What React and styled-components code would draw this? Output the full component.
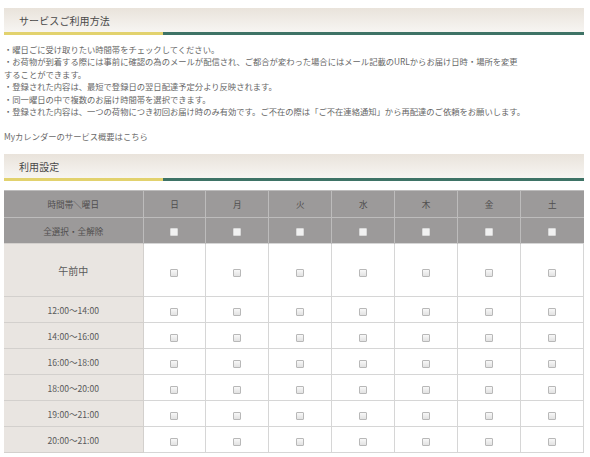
import React from "react";
import styled, { createGlobalStyle } from "styled-components";

const Global = createGlobalStyle`
  html, body { margin: 0; padding: 0; background: #fff; }
  body { font-family: "Noto Sans CJK JP", "Liberation Sans", sans-serif; color: #666; }
`;

const Page = styled.div`
  width: 580px;
  padding: 8px 6px 0 4px;
`;

const SectionHead = styled.div`
  margin-top: ${(p) => p.$top || 0}px;
`;

const Band = styled.div`
  height: 24px;
  display: flex;
  align-items: center;
  padding-left: 15px;
  background: linear-gradient(#e9e3db, #f7f5f2);
  font-size: 10px;
  color: #484848;
  letter-spacing: 0.1px;
`;

const Rule = styled.div`
  height: 3px;
  background: linear-gradient(to right, #e2d26e 0, #e2d26e 159px, #3e7366 159px, #3e7366 100%);
`;

const Notes = styled.div`
  margin-top: 8px;
  font-size: 8.3px;
  line-height: 12.4px;
  color: #666;
`;

const Line = styled.div`
  white-space: nowrap;
  min-height: 12.4px;
`;

const LinkLine = styled.a`
  display: block;
  margin-top: 12.4px;
  color: #6a6a6a;
  text-decoration: none;
  white-space: nowrap;
`;

const Table = styled.table`
  margin-top: 9px;
  width: 580px;
  border-collapse: collapse;
  table-layout: fixed;
`;

const HeadRow = styled.tr`
  height: ${(p) => p.$h}px;
  background: #9c9a9a;
`;

const BodyRow = styled.tr`
  height: ${(p) => p.$h}px;
`;

const HeadCell = styled.th`
  font-weight: normal;
  font-size: 8.6px;
  color: #504e4e;
  text-align: center;
  vertical-align: middle;
  padding: 0;
  border-left: 1px solid #bdbcbc;
  border-top: 1px solid #bdbcbc;
  &:first-child { border-left: none; }
`;

const LabelCell = styled.td`
  background: #e9e5e1;
  text-align: center;
  vertical-align: middle;
  padding: 0;
  font-size: ${(p) => (p.$big ? 10 : 8.6)}px;
  color: #5a5a5a;
  border: 1px solid #d3d0cd;
  border-left: none;
`;

const BoxCell = styled.td`
  background: #fff;
  text-align: center;
  vertical-align: middle;
  padding: 0;
  border: 1px solid #d6d6d6;
`;

const Check = styled.input.attrs({ type: "checkbox" })`
  appearance: none;
  -webkit-appearance: none;
  margin: 0;
  display: inline-block;
  vertical-align: middle;
  width: 8px;
  height: 8px;
  border: 1px solid ${(p) => (p.$head ? "#d8d8d8" : "#b8b8b8")};
  border-radius: 1px;
  background: ${(p) =>
    p.$head ? "#f1f1f1" : "linear-gradient(#f8f8f8, #e2e2e2)"};
  box-sizing: border-box;
`;

const days = ["日", "月", "火", "水", "木", "金", "土"];
const slots = [
  "12:00～14:00",
  "14:00～16:00",
  "16:00～18:00",
  "18:00～20:00",
  "19:00～21:00",
  "20:00～21:00",
];

export default function App() {
  return (
    <>
      <Global />
      <Page>
        <SectionHead>
          <Band>サービスご利用方法</Band>
          <Rule />
        </SectionHead>
        <Notes>
          <Line>・曜日ごに受け取りたい時間帯をチェックしてください。</Line>
          <Line>
            ・お荷物が到着する際には事前に確認の為のメールが配信され、ご都合が変わった場合にはメール記載のURLからお届け日時・場所を変更
          </Line>
          <Line>することができます。</Line>
          <Line>・登録された内容は、最短で登録日の翌日配達予定分より反映されます。</Line>
          <Line>・同一曜日の中で複数のお届け時間帯を選択できます。</Line>
          <Line>
            ・登録された内容は、一つの荷物につき初回お届け時のみ有効です。ご不在の際は「ご不在連絡通知」から再配達のご依頼をお願いします。
          </Line>
          <LinkLine href="#">Myカレンダーのサービス概要はこちら</LinkLine>
        </Notes>
        <SectionHead $top={12}>
          <Band>利用設定</Band>
          <Rule />
        </SectionHead>
        <Table>
          <colgroup>
            <col style={{ width: 139 }} />
            {days.map((d) => (
              <col key={d} />
            ))}
          </colgroup>
          <thead>
            <HeadRow $h={27}>
              <HeadCell>時間帯＼曜日</HeadCell>
              {days.map((d) => (
                <HeadCell key={d}>{d}</HeadCell>
              ))}
            </HeadRow>
            <HeadRow $h={26}>
              <HeadCell>全選択・全解除</HeadCell>
              {days.map((d) => (
                <HeadCell key={d}>
                  <Check $head />
                </HeadCell>
              ))}
            </HeadRow>
          </thead>
          <tbody>
            <BodyRow $h={53}>
              <LabelCell $big>午前中</LabelCell>
              {days.map((d) => (
                <BoxCell key={d}>
                  <Check />
                </BoxCell>
              ))}
            </BodyRow>
            {slots.map((s) => (
              <BodyRow $h={26} key={s}>
                <LabelCell>{s}</LabelCell>
                {days.map((d) => (
                  <BoxCell key={d}>
                    <Check />
                  </BoxCell>
                ))}
              </BodyRow>
            ))}
          </tbody>
        </Table>
      </Page>
    </>
  );
}
